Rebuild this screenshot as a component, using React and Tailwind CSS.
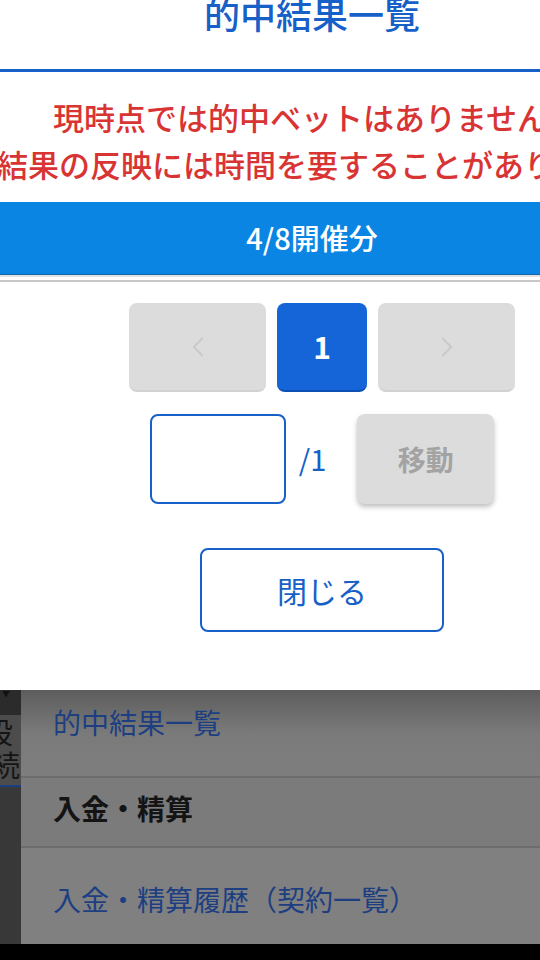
import React from 'react';
import { ChevronLeft, ChevronRight } from 'lucide-react';

const jp = { fontFamily: '"Noto Sans CJK JP", "Noto Sans", sans-serif' };

const PagerButton = ({ children, active }) => (
  <div
    className={`flex items-center justify-center rounded-lg ${
      active
        ? 'w-[90px] bg-[#1565d8] border-b-2 border-[#0c4fb5] text-white'
        : 'w-[137px] bg-[#dcdcdc] border-b-2 border-[#d2d2d2] text-[#c9c9c9]'
    } h-[89px]`}
  >
    {children}
  </div>
);

const ResultModal = () => (
  <div className="h-[690px] bg-white overflow-hidden">
    <div className="w-[644px]">
      <div className="h-[69px] pr-[20px] flex justify-center items-start">
        <h1 className="text-[36px] leading-[36px] font-medium text-[#1660c8] -mt-[5px]">的中結果一覧</h1>
      </div>
      <div className="h-[3px] bg-[#1660c8]" />

      <div className="pt-[21px] pb-[15px] text-[31px] leading-[47px] font-medium text-[#d93434] whitespace-nowrap">
        <p className="pl-[53px]">現時点では的中ベットはありません。</p>
        <p className="-ml-[3px]">結果の反映には時間を要することがあります。</p>
      </div>

      <div className="h-[73px] bg-[#0a85e4] border-b border-[#1565a8] flex items-center justify-center pr-[20px]">
        <span className="text-[29px] font-medium text-white">4/8開催分</span>
      </div>
      <div className="h-[7px] border-y-2 border-[#c8c8c8] border-t-[#e2e2e2]" />

      <div className="flex justify-center gap-[11px] mt-[21px]">
        <PagerButton>
          <ChevronLeft className="w-[34px] h-[34px]" strokeWidth={1.3} />
        </PagerButton>
        <PagerButton active>
          <span className="text-[30px] font-bold">1</span>
        </PagerButton>
        <PagerButton>
          <ChevronRight className="w-[34px] h-[34px]" strokeWidth={1.3} />
        </PagerButton>
      </div>

      <div className="flex justify-center items-center mt-[22px]">
        <div className="w-[136px] h-[90px] rounded-lg border-2 border-[#1660c8] bg-white" />
        <span className="ml-[13px] text-[29px] text-[#1660c8]">/1</span>
        <div className="ml-[31px] w-[137px] h-[90px] rounded-lg bg-[#dcdcdc] shadow-[0_3px_5px_rgba(0,0,0,0.25)] flex items-center justify-center">
          <span className="text-[28px] font-bold text-[#a3a3a3]">移動</span>
        </div>
      </div>

      <div className="flex justify-center mt-[44px]">
        <div className="w-[244px] h-[84px] rounded-lg border-2 border-[#1660c8] flex items-center justify-center">
          <span className="text-[30px] text-[#1660c8]">閉じる</span>
        </div>
      </div>
    </div>
  </div>
);

const SideTab = () => (
  <div className="w-[21px] shrink-0 flex flex-col bg-[#383838]">
    <div className="h-[25px] bg-[#2b2b2b] relative">
      <span className="absolute left-[2px] top-0 text-[8px] leading-[8px] text-[#111]">▼</span>
    </div>
    <div className="h-[72px] bg-[#4c4c4c] border-b-2 border-[#1d3f80] overflow-hidden flex flex-col items-end">
      <span className="text-[29px] leading-[33px] text-[#151515] mr-[8px]">設</span>
      <span className="text-[29px] leading-[33px] text-[#151515] mr-[1px]">続</span>
    </div>
    <div className="flex-1" />
  </div>
);

const MenuList = () => (
  <div className="flex-1 flex flex-col">
    <div className="h-[88px] bg-gradient-to-b from-[#5d5d5d] via-[#7a7a7a] to-[#7e7e7e] border-b-2 border-[#6c6c6c] pl-[32px] pt-[11px]">
      <span className="text-[28px] text-[#1d3f82]">的中結果一覧</span>
    </div>
    <div className="h-[70px] bg-[#7b7b7b] border-b-2 border-[#6c6c6c] pl-[32px] pb-[8px] flex items-center">
      <span className="text-[28px] font-bold text-[#141414]">入金・精算</span>
    </div>
    <div className="flex-1 bg-[#808080] pl-[32px] pt-[30px]">
      <span className="text-[28px] text-[#1d3f82]">入金・精算履歴（契約一覧）</span>
    </div>
  </div>
);

export default function App() {
  return (
    <div className="w-[540px] h-[960px] overflow-hidden flex flex-col bg-black" style={jp}>
      <ResultModal />
      <div className="h-[254px] flex">
        <SideTab />
        <MenuList />
      </div>
      <div className="flex-1 bg-black" />
    </div>
  );
}
